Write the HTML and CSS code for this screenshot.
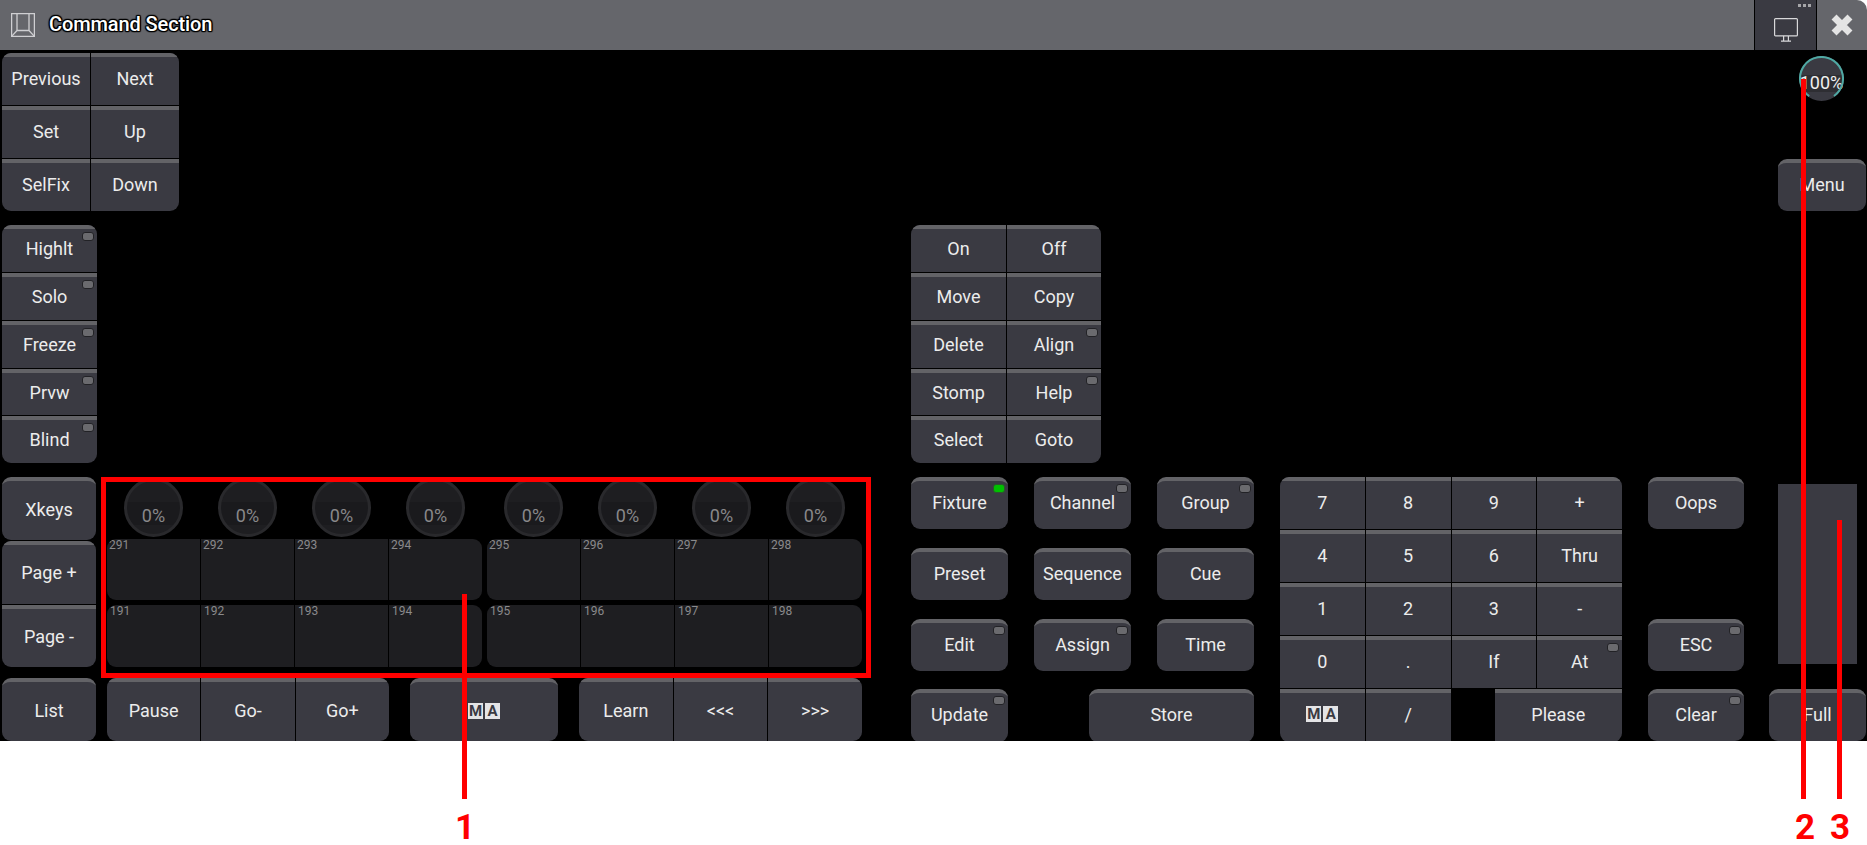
FILE: index.html
```html
<!DOCTYPE html>
<html lang="en">
<head>
  <meta charset="UTF-8" />
  <title>Command Section</title>
  <link rel="stylesheet" href="styles.css">
</head>
<body>
  <div class="titlebar">
    <svg class="title-icon" viewBox="0 0 24 24" fill="none" stroke="#cfcfd2" stroke-width="1.3">
      <rect x="0.6" y="0.6" width="22.8" height="22.8"/>
      <path d="M6 0.6V17.5H18V0.6M6 17.5L0.6 23.4M18 17.5L23.4 23.4"/>
    </svg>
    <span class="title-text">Command Section</span>
    <div class="title-screen">
      <span class="dots"><i></i><i></i><i></i></span>
      <svg class="screen-icon" viewBox="0 0 24 24" fill="none" stroke="#d8d8da" stroke-width="1.2">
        <rect x="0.6" y="0.6" width="22.8" height="17.3" rx="1"/>
        <path d="M9.6 18V22.6M14.4 18V22.6M7 23.2H17"/>
      </svg>
    </div>
    <div class="title-close">
      <svg class="close-icon" viewBox="0 0 22 22">
        <path d="M5.5 5.5L16.5 16.5M16.5 5.5L5.5 16.5" stroke="#e4e4e4" stroke-width="7" stroke-linecap="square"/>
      </svg>
    </div>
  </div>

  <div class="panel">
    <div class="left">
      <div class="group top-keys">
        <div class="key">Previous</div>
        <div class="key">Next</div>
        <div class="key">Set</div>
        <div class="key">Up</div>
        <div class="key">SelFix</div>
        <div class="key">Down</div>
      </div>

      <div class="group mode-keys">
        <div class="key">Highlt<b class="led"></b></div>
        <div class="key">Solo<b class="led"></b></div>
        <div class="key">Freeze<b class="led"></b></div>
        <div class="key">Prvw<b class="led"></b></div>
        <div class="key">Blind<b class="led"></b></div>
      </div>

      <div class="exec-row">
        <div class="page-keys">
          <div class="key single xkeys">Xkeys</div>
          <div class="group page-group">
            <div class="key">Page +</div>
            <div class="key">Page -</div>
          </div>
        </div>

        <div class="execs">
          <div class="banks knobs">
            <div class="bank">
              <div class="slot"><div class="knob">0%</div></div>
              <div class="slot"><div class="knob">0%</div></div>
              <div class="slot"><div class="knob">0%</div></div>
              <div class="slot"><div class="knob">0%</div></div>
            </div>
            <div class="bank">
              <div class="slot"><div class="knob">0%</div></div>
              <div class="slot"><div class="knob">0%</div></div>
              <div class="slot"><div class="knob">0%</div></div>
              <div class="slot"><div class="knob">0%</div></div>
            </div>
          </div>
          <div class="banks upper">
            <div class="bank cells">
              <div class="cell">291</div>
              <div class="cell">292</div>
              <div class="cell">293</div>
              <div class="cell">294</div>
            </div>
            <div class="bank cells">
              <div class="cell">295</div>
              <div class="cell">296</div>
              <div class="cell">297</div>
              <div class="cell">298</div>
            </div>
          </div>
          <div class="banks lower">
            <div class="bank cells">
              <div class="cell">191</div>
              <div class="cell">192</div>
              <div class="cell">193</div>
              <div class="cell">194</div>
            </div>
            <div class="bank cells">
              <div class="cell">195</div>
              <div class="cell">196</div>
              <div class="cell">197</div>
              <div class="cell">198</div>
            </div>
          </div>
        </div>
      </div>

      <div class="transport">
        <div class="key single list">List</div>
        <div class="group trio go-trio">
          <div class="key">Pause</div>
          <div class="key">Go-</div>
          <div class="key">Go+</div>
        </div>
        <div class="key single ma-key"><span class="ma"><i>M</i><i>A</i></span></div>
        <div class="group trio">
          <div class="key">Learn</div>
          <div class="key">&lt;&lt;&lt;</div>
          <div class="key">&gt;&gt;&gt;</div>
        </div>
      </div>
    </div>

    <div class="center">
      <div class="group edit-keys">
        <div class="key">On</div>
        <div class="key">Off</div>
        <div class="key">Move</div>
        <div class="key">Copy</div>
        <div class="key">Delete</div>
        <div class="key">Align<b class="led"></b></div>
        <div class="key">Stomp</div>
        <div class="key">Help<b class="led"></b></div>
        <div class="key">Select</div>
        <div class="key">Goto</div>
      </div>

      <div class="command-row">
        <div class="objects">
          <div class="key single">Fixture<b class="led on"></b></div>
          <div class="key single">Channel<b class="led"></b></div>
          <div class="key single">Group<b class="led"></b></div>
          <div class="key single">Preset</div>
          <div class="key single">Sequence</div>
          <div class="key single">Cue</div>
          <div class="key single">Edit<b class="led"></b></div>
          <div class="key single">Assign<b class="led"></b></div>
          <div class="key single">Time</div>
          <div class="key single last-row">Update<b class="led"></b></div>
          <div class="key single last-row store">Store</div>
        </div>

        <div class="group numpad">
          <div class="key">7</div>
          <div class="key">8</div>
          <div class="key">9</div>
          <div class="key">+</div>
          <div class="key">4</div>
          <div class="key">5</div>
          <div class="key">6</div>
          <div class="key">Thru</div>
          <div class="key">1</div>
          <div class="key">2</div>
          <div class="key">3</div>
          <div class="key">-</div>
          <div class="key">0</div>
          <div class="key">.</div>
          <div class="key">If</div>
          <div class="key">At<b class="led"></b></div>
          <div class="key"><span class="ma"><i>M</i><i>A</i></span></div>
          <div class="key">/</div>
          <div class="key please">Please</div>
        </div>
      </div>
    </div>

    <div class="side">
      <div class="master">
        <svg class="master-ring" viewBox="0 0 45 45" fill="none">
          <circle cx="22.5" cy="22.5" r="21.5" stroke="#4fa8a3" stroke-width="2" stroke-dasharray="108 27" transform="rotate(125 22.5 22.5)"/>
        </svg>
        <span>100%</span>
      </div>
      <div class="key single menu">Menu</div>
      <div class="side-row">
        <div class="side-keys">
          <div class="key single">Oops</div>
          <div class="key single esc">ESC<b class="led"></b></div>
          <div class="key single clear">Clear<b class="led"></b></div>
        </div>
        <div class="fader-col">
          <div class="fader"></div>
          <div class="key single full">Full</div>
        </div>
      </div>
    </div>
  </div>

  <!-- callouts drawn on top of the screenshot -->
  <div class="mark-box"></div>
  <div class="mark-line line-1"></div>
  <div class="mark-line line-2"></div>
  <div class="mark-line line-3"></div>
  <span class="mark-num num-1">1</span>
  <span class="mark-num num-2">2</span>
  <span class="mark-num num-3">3</span>
</body>
</html>
```

FILE: styles.css
```css
body {
  margin: 0;
  background-color: #fff;
  font-family: Roboto, "Liberation Sans", sans-serif;
  height: 845px;
  overflow: hidden;
  position: relative;
}

/* title bar */
.titlebar {
  display: flex;
  align-items: center;
  height: 50px;
  background-color: #65666b;
  border-top-right-radius: 10px;
  overflow: hidden;
}

.title-icon {
  width: 24px;
  height: 24px;
  margin-left: 11px;
}

.title-text {
  margin: 0 0 2px 14px;
  font-size: 20px;
  font-weight: 500;
  letter-spacing: -0.1px;
  color: #fff;
  text-shadow: 1px 0 1px #000, -1px 0 1px #000, 0 1px 1px #000, 0 -1px 1px #000,
    1px 1px 1px #000, -1px -1px 1px #000, 1px -1px 1px #000, -1px 1px 1px #000;
}

.title-screen {
  display: flex;
  justify-content: center;
  align-items: center;
  position: relative;
  width: 61px;
  height: 50px;
  margin-left: auto;
  background-color: #3a3a42;
  border-left: 1px solid #000;
  border-right: 1px solid #000;
}

.dots {
  display: flex;
  gap: 2px;
  position: absolute;
  top: 4px;
  right: 5px;
}

.dots i {
  width: 3px;
  height: 3px;
  background-color: #a5a5a8;
}

.screen-icon {
  width: 24px;
  height: 24px;
  margin-top: 10px;
}

.title-close {
  display: flex;
  justify-content: center;
  align-items: center;
  width: 50px;
  height: 50px;
}

.close-icon {
  width: 22px;
  height: 22px;
}

/* main area */
.panel {
  display: flex;
  height: 691px;
  background-color: #000;
  overflow: hidden;
}

.left {
  width: 860px;
  margin-left: 2px;
}

.center {
  width: 711px;
  margin-left: 49px;
  padding-top: 175px;
}

.side {
  display: flex;
  flex-direction: column;
  width: 218px;
  margin-left: 26px;
}

/* keys */
.key {
  display: flex;
  align-items: center;
  justify-content: center;
  position: relative;
  box-sizing: border-box;
  padding-bottom: 6px;
  background-color: #3a3a42;
  border-top: 4px solid #636367;
  color: #ececec;
  font-size: 18px;
}

.single {
  border-radius: 9px;
}

.group {
  display: grid;
  gap: 1px;
  border-radius: 9px;
  overflow: hidden;
}

.led {
  position: absolute;
  top: 3px;
  right: 3px;
  box-sizing: border-box;
  width: 12px;
  height: 9px;
  background-color: #6a6a6e;
  border: 1px solid #222226;
  border-radius: 3px;
}

.led.on {
  background-color: #00c000;
  border-color: #2a5a2a;
}

.ma {
  display: flex;
  gap: 2px;
}

.ma i {
  width: 15px;
  height: 16px;
  background-color: #e4e4e6;
  color: #3a3a42;
  font-size: 15px;
  font-style: normal;
  font-weight: 700;
  line-height: 16px;
  text-align: center;
}

/* left side */
.top-keys {
  grid-template-columns: 88px 88px;
  grid-auto-rows: 52px;
  width: 177px;
  margin-top: 3px;
}

.mode-keys {
  grid-template-rows: 47px 47px 47px 46px 47px;
  width: 95px;
  margin-top: 14px;
}

.mode-keys .key,
.edit-keys .key {
  padding-bottom: 4px;
}

.exec-row {
  display: flex;
  gap: 11px;
  margin-top: 14px;
}

.page-keys {
  display: flex;
  flex-direction: column;
  gap: 1px;
  width: 94px;
  height: 190px;
}

.xkeys {
  height: 63px;
  padding-bottom: 2px;
}

.page-group {
  flex: 1;
  grid-auto-rows: 1fr;
}

.page-group .key {
  padding-bottom: 3px;
}

.execs {
  width: 755px;
}

.banks {
  display: grid;
  grid-template-columns: 1fr 1fr;
  gap: 5px;
}

.bank {
  display: grid;
  grid-template-columns: repeat(4, 1fr);
  gap: 1px;
}

.knobs {
  margin-top: 1px;
}

.slot {
  display: flex;
  justify-content: center;
}

.knob {
  display: flex;
  align-items: flex-end;
  justify-content: center;
  box-sizing: border-box;
  width: 59px;
  height: 59px;
  padding-bottom: 8px;
  border: 3px solid #29292c;
  border-radius: 50%;
  background: linear-gradient(#1e1e21 0 21px, #1a1a1d 21px 44px, #1e1e21 44px);
  color: #88888a;
  font-size: 18px;
}

.cells {
  border-radius: 9px;
  overflow: hidden;
}

.upper {
  margin-top: 2px;
}

.upper .cell {
  height: 61px;
  padding-left: 2px;
}

.lower {
  margin-top: 5px;
}

.lower .cell {
  height: 62px;
  padding-left: 3px;
}

.cell {
  box-sizing: border-box;
  background-color: #1e1e21;
  color: #8a8a8c;
  font-size: 12px;
  line-height: 12px;
}

.transport {
  display: flex;
  height: 63px;
  margin-top: 11px;
}

.transport .key {
  padding-bottom: 2px;
}

.list {
  width: 94px;
  margin-right: 11px;
}

.trio {
  grid-template-columns: repeat(3, 1fr);
  width: 283px;
}

.go-trio {
  width: 282px;
}

.ma-key {
  width: 148px;
  margin: 0 21px 0 21px;
}

/* centre */
.edit-keys {
  grid-template-columns: 95px 94px;
  grid-template-rows: 47px 47px 47px 46px 47px;
  width: 190px;
}

.command-row {
  display: flex;
  gap: 26px;
  margin-top: 14px;
}

.objects {
  display: grid;
  grid-template-columns: repeat(3, 97px);
  grid-auto-rows: 52px;
  gap: 19px 26px;
}

.last-row {
  margin-top: -1px;
}

.store {
  grid-column: 2 / 4;
  margin-left: 55px;
}

.numpad {
  grid-template-columns: repeat(4, 1fr);
  grid-auto-rows: 52px;
  width: 342px;
}

.please {
  grid-column: 3 / 5;
  margin-left: 43px;
}

/* right side */
.master {
  display: flex;
  align-items: center;
  justify-content: center;
  position: relative;
  box-sizing: border-box;
  width: 45px;
  height: 45px;
  margin: 6px 0 0 151px;
  padding-top: 7px;
  border-radius: 50%;
  background: linear-gradient(#3a3a42 0 19px, #2e2e33 19px 36px, #3a3a42 36px);
  color: #f0f0f0;
  font-size: 18px;
}

.master-ring {
  position: absolute;
  inset: 0;
}

.menu {
  flex: none;
  width: 88px;
  height: 52px;
  margin: 58px 0 0 130px;
}

.side-row {
  display: flex;
  gap: 25px;
  margin-top: 266px;
}

.side-keys {
  display: flex;
  flex-direction: column;
  width: 96px;
}

.side-keys .key {
  flex: none;
  height: 52px;
}

.esc {
  margin-top: 90px;
}

.clear {
  margin-top: 18px;
}

.fader-col {
  width: 97px;
}

.fader {
  width: 79px;
  height: 180px;
  margin: 7px 0 25px 9px;
  background-color: #3a3a42;
}

.full {
  height: 52px;
}

/* red callouts */
.mark-box,
.mark-line,
.mark-num {
  position: absolute;
}

.mark-box {
  left: 101px;
  top: 477px;
  box-sizing: border-box;
  width: 770px;
  height: 201px;
  border: 5px solid #f00;
}

.mark-line {
  width: 5px;
  background-color: #f00;
}

.line-1 {
  left: 462px;
  top: 594px;
  height: 205px;
}

.line-2 {
  left: 1801px;
  top: 79px;
  height: 720px;
}

.line-3 {
  left: 1837px;
  top: 520px;
  height: 279px;
}

.mark-num {
  top: 808px;
  color: #f00;
  font-size: 35px;
  font-weight: 700;
  line-height: 40px;
}

.num-1 {
  left: 455px;
}

.num-2 {
  left: 1795px;
}

.num-3 {
  left: 1830px;
}
```
